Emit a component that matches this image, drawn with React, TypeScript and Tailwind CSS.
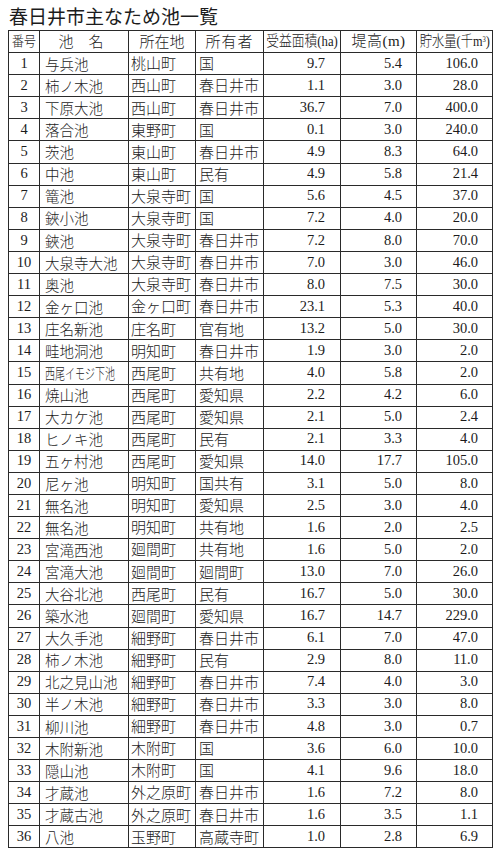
import React from "react";

type Row = [number, string, string, string, string, string, string];

const rows: Row[] = [
  [1, "与兵池", "桃山町", "国", "9.7", "5.4", "106.0"],
  [2, "柿ノ木池", "西山町", "春日井市", "1.1", "3.0", "28.0"],
  [3, "下原大池", "西山町", "春日井市", "36.7", "7.0", "400.0"],
  [4, "落合池", "東野町", "国", "0.1", "3.0", "240.0"],
  [5, "茨池", "東山町", "春日井市", "4.9", "8.3", "64.0"],
  [6, "中池", "東山町", "民有", "4.9", "5.8", "21.4"],
  [7, "篭池", "大泉寺町", "国", "5.6", "4.5", "37.0"],
  [8, "鋏小池", "大泉寺町", "国", "7.2", "4.0", "20.0"],
  [9, "鋏池", "大泉寺町", "春日井市", "7.2", "8.0", "70.0"],
  [10, "大泉寺大池", "大泉寺町", "春日井市", "7.0", "3.0", "46.0"],
  [11, "奥池", "大泉寺町", "春日井市", "8.0", "7.5", "30.0"],
  [12, "金ヶ口池", "金ヶ口町", "春日井市", "23.1", "5.3", "40.0"],
  [13, "庄名新池", "庄名町", "官有地", "13.2", "5.0", "30.0"],
  [14, "畦地洞池", "明知町", "春日井市", "1.9", "3.0", "2.0"],
  [15, "西尾イモジ下池", "西尾町", "共有地", "4.0", "5.8", "2.0"],
  [16, "焼山池", "西尾町", "愛知県", "2.2", "4.2", "6.0"],
  [17, "大カケ池", "西尾町", "愛知県", "2.1", "5.0", "2.4"],
  [18, "ヒノキ池", "西尾町", "民有", "2.1", "3.3", "4.0"],
  [19, "五ヶ村池", "西尾町", "愛知県", "14.0", "17.7", "105.0"],
  [20, "尼ヶ池", "明知町", "国共有", "3.1", "5.0", "8.0"],
  [21, "無名池", "明知町", "愛知県", "2.5", "3.0", "4.0"],
  [22, "無名池", "明知町", "共有地", "1.6", "2.0", "2.5"],
  [23, "宮滝西池", "廻間町", "共有地", "1.6", "5.0", "2.0"],
  [24, "宮滝大池", "廻間町", "廻間町", "13.0", "7.0", "26.0"],
  [25, "大谷北池", "西尾町", "民有", "16.7", "5.0", "30.0"],
  [26, "築水池", "廻間町", "愛知県", "16.7", "14.7", "229.0"],
  [27, "大久手池", "細野町", "春日井市", "6.1", "7.0", "47.0"],
  [28, "柿ノ木池", "細野町", "民有", "2.9", "8.0", "11.0"],
  [29, "北之見山池", "細野町", "春日井市", "7.4", "4.0", "3.0"],
  [30, "半ノ木池", "細野町", "春日井市", "3.3", "3.0", "8.0"],
  [31, "柳川池", "細野町", "春日井市", "4.8", "3.0", "0.7"],
  [32, "木附新池", "木附町", "国", "3.6", "6.0", "10.0"],
  [33, "隠山池", "木附町", "国", "4.1", "9.6", "18.0"],
  [34, "才蔵池", "外之原町", "春日井市", "1.6", "7.2", "8.0"],
  [35, "才蔵古池", "外之原町", "春日井市", "1.6", "3.5", "1.1"],
  [36, "八池", "玉野町", "高蔵寺町", "1.0", "2.8", "6.9"],
];

const serif = { fontFamily: "'Liberation Serif', 'Noto Sans CJK JP', serif" };
const jp = { fontFamily: "'Noto Sans CJK JP', sans-serif" };
const grid =
  "grid grid-cols-[31px_89px_67px_68px_77px_76px_76px] h-[22.1px]";
const cell = "border-r border-b border-[#2a2a2a] flex items-center overflow-hidden whitespace-nowrap";

export default function App() {
  return (
    <div className="w-[500px] h-[854px] bg-white text-[#1c1c1c]">
      <div
        className="h-[30px] flex items-center pl-[9px] text-[19px] font-normal leading-none"
        style={jp}
      >
        春日井市主なため池一覧
      </div>
      <div className="ml-[8px] w-[485px] border-l border-t border-[#2a2a2a]" style={serif}>
        <div className={`${grid} font-light`}>
          <div className={`${cell} justify-center text-[14px]`}>
            <span className="inline-block scale-x-[0.85]">番号</span>
          </div>
          <div className={`${cell} justify-center text-[15px] pr-[6px]`} style={jp}>池　名</div>
          <div className={`${cell} justify-center text-[15px]`} style={jp}>所在地</div>
          <div className={`${cell} justify-center text-[15px] tracking-[1px]`} style={jp}>所有者</div>
          <div className={`${cell} justify-center text-[15px]`}>
            <span className="inline-block scale-x-[0.85]">受益面積(ha)</span>
          </div>
          <div className={`${cell} justify-center text-[15px]`}>
            <span className="inline-block tracking-[0.5px]">堤高(m)</span>
          </div>
          <div className={`${cell} justify-center text-[15px]`}>
            <span className="inline-block scale-x-[0.82]">
              貯水量(千m<sup className="text-[8px]">3</sup>)
            </span>
          </div>
        </div>
        {rows.map((r) => (
          <div key={r[0]} className={grid}>
            <div className={`${cell} justify-center text-[14.5px]`}>{r[0]}</div>
            <div className={`${cell} pl-[5px] text-[14.5px] font-light`} style={jp}>
              {r[1].length > 6 ? (
                <span className="inline-block scale-x-[0.69] origin-left">{r[1]}</span>
              ) : (
                r[1]
              )}
            </div>
            <div className={`${cell} pl-[2px] text-[15px] font-light`} style={jp}>{r[2]}</div>
            <div className={`${cell} pl-[3px] text-[15px] font-light`} style={jp}>{r[3]}</div>
            <div className={`${cell} justify-end pr-[15px] text-[14.5px]`}>{r[4]}</div>
            <div className={`${cell} justify-end pr-[14px] text-[14.5px]`}>{r[5]}</div>
            <div className={`${cell} justify-end pr-[14px] text-[14.5px]`}>{r[6]}</div>
          </div>
        ))}
      </div>
    </div>
  );
}
